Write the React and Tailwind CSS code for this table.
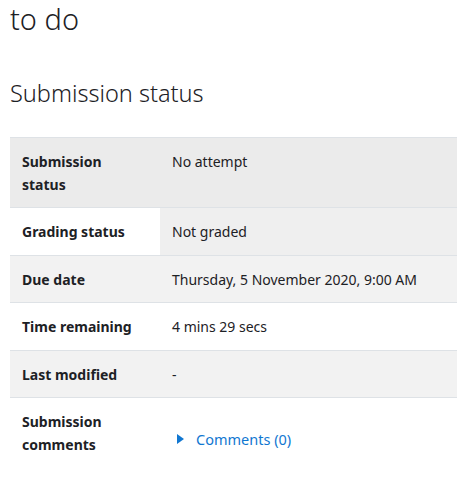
export default function App() {
  const rows = [
    { label: "Submission status", value: "No attempt", bg: "bg-[#ebebeb]", tdBg: "" },
    { label: "Grading status", value: "Not graded", bg: "bg-white", tdBg: "bg-[#efefef]" },
    { label: "Due date", value: "Thursday, 5 November 2020, 9:00 AM", bg: "bg-[#f2f2f2]", tdBg: "" },
    { label: "Time remaining", value: "4 mins 29 secs", bg: "bg-white", tdBg: "" },
    { label: "Last modified", value: "-", bg: "bg-[#f2f2f2]", tdBg: "" },
  ];

  return (
    <div className="w-[457px] h-[485px] overflow-hidden bg-white text-[#1d2125] font-['Noto_Sans',sans-serif]">
      <h2 className="pl-[10px] pt-[1px] text-[29px] leading-[36px] font-light">to do</h2>

      <h3 className="pl-[10px] mt-[41px] text-[23.5px] leading-[30px] font-light">Submission status</h3>

      <table className="ml-[10px] mt-[29px] w-[480px] border-collapse text-[14px] leading-[22.5px]">
        <tbody>
          {rows.map((r, i) => (
            <tr key={i} className={`${r.bg} border-t border-[#dee2e6]`}>
              <th className="w-[150px] px-3 py-3 pt-[13px] pb-[11px] text-left align-top font-bold">{r.label}</th>
              <td className={`${r.tdBg} px-3 pt-[13px] pb-[11px] align-top`}>{r.value}</td>
            </tr>
          ))}
          <tr className="bg-white border-t border-[#dee2e6]">
            <th className="w-[150px] px-3 pt-[13px] pb-[11px] text-left align-top font-bold">Submission comments</th>
            <td className="px-3 pt-[30px] align-top">
              <span className="inline-flex items-center text-[#1177d1] text-[14.5px]">
                <svg width="8" height="10" viewBox="0 0 8 10" className="ml-[5px] mr-[11px]">
                  <path d="M0 0 L7 5 L0 10 Z" fill="#1177d1" />
                </svg>
                Comments (0)
              </span>
            </td>
          </tr>
        </tbody>
      </table>
    </div>
  );
}
